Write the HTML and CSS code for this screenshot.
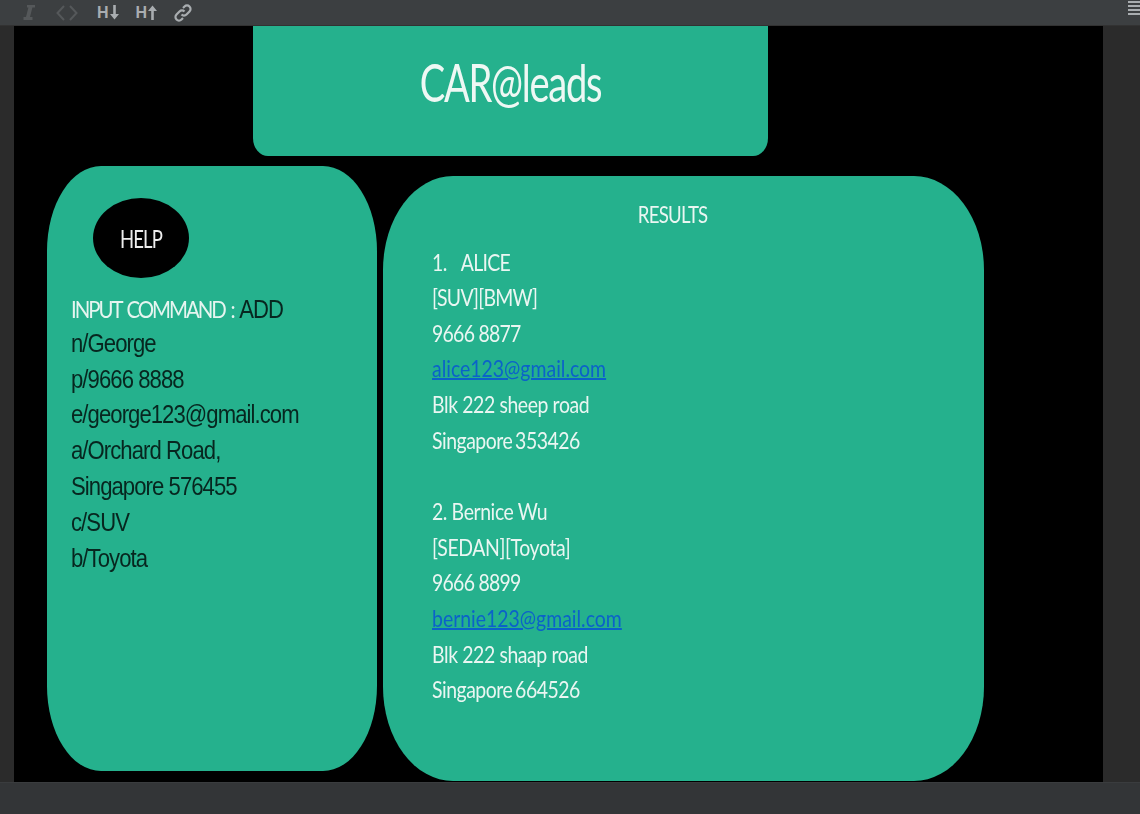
FILE: index.html
```html
<!DOCTYPE html>
<html lang="en">
<head>
    <meta charset="UTF-8">
    <title>CAR@leads</title>
    <link rel="stylesheet" href="styles.css">
</head>
<body>
    <div class="toolbar">
        <svg class="tool tool-dim" width="16" height="18" viewBox="0 0 16 18"><path d="M6 1h8v2.500h-2.600L9 13h2.500v3h-9v-3H5l2.400-9.500H6z" fill="currentColor"/></svg>
        <svg class="tool tool-dim" width="22" height="18" viewBox="0 0 22 18"><path d="M8 2L1.500 9 8 16M14 2l6.500 7-6.500 7" fill="none" stroke="currentColor" stroke-width="2"/></svg>
        <span class="tool tool-h">H<svg width="9" height="15" viewBox="0 0 9 15"><path d="M3.200 0h2.600v9H9l-4.500 5.500L0 9h3.200z" fill="currentColor"/></svg></span>
        <span class="tool tool-h">H<svg width="9" height="15" viewBox="0 0 9 15"><path d="M3.200 15h2.600V6H9L4.500 .5 0 6h3.200z" fill="currentColor"/></svg></span>
        <svg class="tool tool-link" width="20" height="20" viewBox="0 0 20 20"><path d="M8.500 11.500a3.500 3.500 0 0 0 5 0l3-3a3.500 3.500 0 0 0-5-5l-1.500 1.500M11.500 8.500a3.500 3.500 0 0 0-5 0l-3 3a3.500 3.500 0 0 0 5 5l1.500-1.500" fill="none" stroke="currentColor" stroke-width="2.200"/></svg>
        <div class="menu-lines"><i></i><i></i><i></i><i></i></div>
    </div>

    <div class="editor">
        <div class="slide">
            <div class="title-card"><div class="title-text">CAR@leads</div></div>
            <div class="panels">
                <section class="panel-command">
                    <div class="help-oval"><div class="help-text">HELP</div></div>
                    <div class="command-text">
                        <div class="command-label"><span class="light">INPUT COMMAND : </span>ADD</div>
                        <div>n/George</div>
                        <div>p/9666 8888</div>
                        <div>e/george123@gmail.com</div>
                        <div>a/Orchard Road,</div>
                        <div>Singapore 576455</div>
                        <div>c/SUV</div>
                        <div>b/Toyota</div>
                    </div>
                </section>
                <section class="panel-results">
                    <div class="results-title">RESULTS</div>
                    <div class="result">
                        <div>1.&nbsp;&nbsp; <span class="tight">ALICE</span></div>
                        <div class="tight">[SUV][BMW]</div>
                        <div class="tight">9666 8877</div>
                        <div><a href="#">alice123@gmail.com</a></div>
                        <div>Blk 222 sheep road</div>
                        <div class="tight postcode">Singapore 353426</div>
                    </div>
                    <div class="result">
                        <div>2. Bernice Wu</div>
                        <div>[SEDAN][Toyota]</div>
                        <div class="tight">9666 8899</div>
                        <div><a href="#">bernie123@gmail.com</a></div>
                        <div>Blk 222 shaap road</div>
                        <div class="tight postcode">Singapore 664526</div>
                    </div>
                </section>
            </div>
        </div>
    </div>

    <div class="statusbar"></div>
</body>
</html>
```

FILE: styles.css
```css
html, body {
    margin: 0;
    padding: 0;
    height: 814px;
    overflow: hidden;
}
body {
    display: flex;
    flex-direction: column;
    background-color: #2b2b2b;
    font-family: "Lato", "Liberation Sans", sans-serif;
}
.toolbar {
    height: 25px;
    flex: none;
    display: flex;
    align-items: center;
    background-color: #3c3f41;
    border-bottom: 1px solid #323232;
    color: #a9adb0;
}
.tool {
    flex: none;
}
.tool-dim {
    color: #55585a;
    margin-left: 21px;
}
.tool-dim + .tool-dim {
    margin-left: 19px;
}
.tool-h {
    display: flex;
    align-items: center;
    gap: 1px;
    margin-left: 19px;
    font: bold 16px "Liberation Sans", sans-serif;
}
.tool-h + .tool-h {
    margin-left: 17px;
}
.tool-link {
    margin-left: 16px;
}
.menu-lines {
    margin-left: auto;
    width: 12px;
    display: flex;
    flex-direction: column;
    gap: 2px;
    align-self: flex-start;
    padding-top: 1px;
}
.menu-lines i {
    display: block;
    height: 2px;
    background-color: #a9adb0;
}
.editor {
    height: 756px;
    flex: none;
    margin: 0 37px 0 14px;
    background-color: #000;
    overflow: hidden;
}
.statusbar {
    flex: 1;
    background-color: #333537;
    border-top: 1px solid #3a3c3e;
}
.title-card {
    width: 515px;
    height: 130px;
    margin-left: 239px;
    box-sizing: border-box;
    padding-top: 27px;
    background-color: #25b18d;
    border-radius: 0 0 15px 15px / 0 0 18px 18px;
}
.title-text {
    color: #eef8f4;
    font-size: 53px;
    line-height: 58px;
    text-align: center;
    letter-spacing: -1.800px;
    transform: scaleX(0.72);
    filter: blur(0.4px);
}
.panels {
    display: flex;
    align-items: flex-start;
    gap: 6px;
    margin: 10px 0 0 33px;
}
.panel-command {
    width: 330px;
    height: 605px;
    flex: none;
    box-sizing: border-box;
    padding: 32px 24px 0;
    background-color: #25b18d;
    border-radius: 54px / 85px;
}
.help-oval {
    width: 96px;
    height: 80px;
    margin-left: 22px;
    border-radius: 50%;
    background-color: #000;
}
.help-text {
    color: #eee;
    font-size: 25px;
    line-height: 80px;
    text-align: center;
    letter-spacing: -1.200px;
    transform: scaleX(0.74);
    filter: blur(0.3px);
}
.command-text {
    margin-top: 13px;
    color: #07261f;
    font-family: "Liberation Sans", sans-serif;
    font-size: 26px;
    line-height: 35.800px;
    letter-spacing: -1.100px;
    white-space: nowrap;
    transform: scaleX(0.85);
    transform-origin: left top;
    filter: blur(0.4px);
}
.command-label {
    margin-bottom: -2px;
}
.command-label .light {
    font-family: "Lato", sans-serif;
    font-size: 24px;
    color: #e6f5f0;
    letter-spacing: -2.400px;
    word-spacing: 3px;
}
.panel-results {
    width: 601px;
    height: 605px;
    flex: none;
    margin-top: 10px;
    box-sizing: border-box;
    padding: 20px 49px 0;
    background-color: #25b18d;
    border-radius: 70px / 94px;
    color: #eaf6f2;
    font-size: 24px;
    line-height: 35.600px;
    letter-spacing: -0.500px;
    white-space: nowrap;
}
.results-title {
    padding-right: 28px;
    text-align: center;
    letter-spacing: -1px;
    transform: scaleX(0.775);
    filter: blur(0.4px);
}
.result {
    margin-top: 12px;
    transform: scaleX(0.81);
    transform-origin: left top;
    filter: blur(0.4px);
}
.result + .result {
    margin-top: 36px;
}
.tight {
    letter-spacing: -0.900px;
}
.postcode {
    letter-spacing: -0.600px;
    word-spacing: -2px;
}
.result a {
    color: #0b62c9;
    letter-spacing: 0;
    text-decoration: underline;
    text-decoration-thickness: 2px;
}
```
